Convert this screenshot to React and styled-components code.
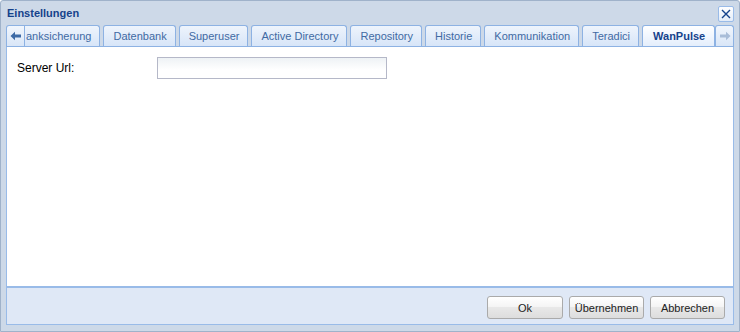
import React from "react";
import styled, { createGlobalStyle, css } from "styled-components";

const Global = createGlobalStyle`
  html, body { margin: 0; padding: 0; background: #ffffff; }
  body { font-family: "Liberation Sans", Arial, sans-serif; }
  * { box-sizing: border-box; }
`;

const Win = styled.div`
  width: 740px;
  height: 332px;
  display: flex;
  flex-direction: column;
  background: #cdd9e8;
  border: 1px solid #9fb2ca;
  border-radius: 3px 3px 0 0;
  padding: 0 5px 6px 5px;
`;

const Header = styled.div`
  height: 24px;
  display: flex;
  align-items: center;
  justify-content: space-between;
  padding: 0 0 0 1px;
`;

const Title = styled.div`
  font-size: 11px;
  font-weight: bold;
  color: #15428b;
`;

const CloseBtn = styled.div`
  width: 16px;
  height: 16px;
  margin-top: 2px;
  border: 1px solid #99bbe8;
  border-radius: 2px;
  background: linear-gradient(#ffffff, #e3ecf8);
  display: flex;
  align-items: center;
  justify-content: center;
`;

const TabBar = styled.div`
  height: 22px;
  display: flex;
  align-items: flex-end;
  border-bottom: 1px solid #8db2e3;
`;

const Scroller = styled.div`
  width: 19px;
  height: 21px;
  flex: none;
  display: flex;
  align-items: center;
  justify-content: center;
  border: 1px solid #8db2e3;
  border-bottom: none;
  border-radius: 3px 3px 0 0;
  background: linear-gradient(#f1f6fd, #d9e6f7);
  ${(p) => p.$left && css`border-radius: 3px 0 0 0;`}
`;

const Strip = styled.div`
  flex: 1;
  display: flex;
  align-items: flex-end;
  gap: 3px;
  overflow: hidden;
  height: 21px;
`;

const Tab = styled.div`
  flex: none;
  height: 21px;
  padding: 0 8px 0 9px;
  display: flex;
  align-items: center;
  font-size: 11px;
  color: #416aa3;
  border: 1px solid #8db2e3;
  border-bottom: none;
  border-radius: 3px 3px 0 0;
  background: linear-gradient(#eef4fc, #d7e5f8);
  white-space: nowrap;
  ${(p) =>
    p.$clipped &&
    css`
      border-left: none;
      border-radius: 0 3px 0 0;
      padding-left: 1px;
      padding-right: 8px;
    `}
  ${(p) =>
    p.$active &&
    css`
      height: 22px;
      margin-bottom: -1px;
      color: #15428b;
      font-weight: bold;
      background: linear-gradient(#ffffff 0%, #f3f8ff 40%, #e3edfb 100%);
      padding: 0 9px 1px 10px;
    `}
`;

const Panel = styled.div`
  flex: 1;
  background: #ffffff;
  border: 1px solid #99bbe8;
  border-top: none;
  padding: 10px 10px;
`;

const FormRow = styled.div`
  display: flex;
  align-items: center;
`;

const Label = styled.label`
  width: 140px;
  font-size: 12px;
  color: #000;
`;

const Input = styled.input`
  width: 230px;
  height: 22px;
  border: 1px solid #b5b8c8;
  background: linear-gradient(#eef2f5 0px, #ffffff 12px);
  padding: 2px 3px;
  font-size: 12px;
  font-family: "Liberation Sans", Arial, sans-serif;
  outline: none;
`;

const Footer = styled.div`
  height: 38px;
  background: #dfe8f6;
  border: 1px solid #99bbe8;
  display: flex;
  justify-content: flex-end;
  align-items: flex-start;
  gap: 6px;
  padding: 8px 8px 0 0;
`;

const Button = styled.button`
  width: ${(p) => p.$w || 75}px;
  height: 23px;
  border: 1px solid #aaaaaa;
  border-radius: 3px;
  background: linear-gradient(#ffffff 0%, #f5f5f5 45%, #e8e8e8 50%, #dddddd 100%);
  font-size: 11px;
  font-family: "Liberation Sans", Arial, sans-serif;
  color: #222;
  padding: 0;
`;

const tabs = ["Datenbank", "Superuser", "Active Directory", "Repository", "Historie", "Kommunikation", "Teradici"];

export default function App() {
  return (
    <>
      <Global />
      <Win>
        <Header>
          <Title>Einstellungen</Title>
          <CloseBtn>
            <svg width="12" height="12" viewBox="0 0 12 12">
              <path d="M2 2 L10 10 M10 2 L2 10" stroke="#15428b" strokeWidth="1.4" fill="none" />
            </svg>
          </CloseBtn>
        </Header>
        <TabBar>
          <Scroller $left>
            <svg width="12" height="10" viewBox="0 0 12 10">
              <path d="M0.5 5 L5 0.8 L5 3.5 L11 3.5 L11 6.5 L5 6.5 L5 9.2 Z" fill="#3d6aa6" />
            </svg>
          </Scroller>
          <Strip>
            <Tab $clipped>anksicherung</Tab>
            {tabs.map((t) => (
              <Tab key={t}>{t}</Tab>
            ))}
            <Tab $active>WanPulse</Tab>
          </Strip>
          <Scroller>
            <svg width="12" height="10" viewBox="0 0 12 10">
              <path d="M11.5 5 L7 0.8 L7 3.5 L1 3.5 L1 6.5 L7 6.5 L7 9.2 Z" fill="#a9bdd8" />
            </svg>
          </Scroller>
        </TabBar>
        <Panel>
          <FormRow>
            <Label>Server Url:</Label>
            <Input type="text" />
          </FormRow>
        </Panel>
        <Footer>
          <Button $w={76}>Ok</Button>
          <Button>Übernehmen</Button>
          <Button>Abbrechen</Button>
        </Footer>
      </Win>
    </>
  );
}
